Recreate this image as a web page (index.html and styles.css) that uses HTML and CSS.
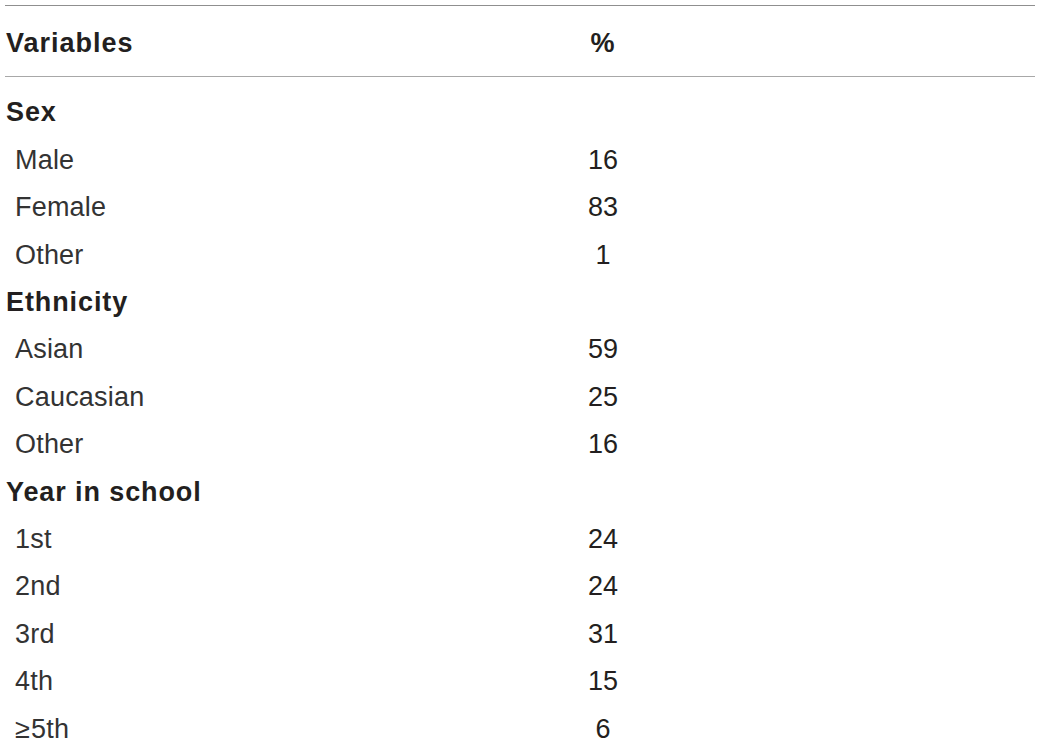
FILE: index.html
```html
<!DOCTYPE html>
<html>
<head>
<meta charset="utf-8">
<link rel="stylesheet" href="styles.css">
</head>
<body>
<table class="tbl">
  <thead>
    <tr><th class="c1">Variables</th><th class="c2">%</th><th class="c3"></th></tr>
  </thead>
  <tbody>
    <tr class="grp first"><td class="c1">Sex</td><td class="c2"></td><td></td></tr>
    <tr><td class="c1 sub">Male</td><td class="c2">16</td><td></td></tr>
    <tr><td class="c1 sub">Female</td><td class="c2">83</td><td></td></tr>
    <tr><td class="c1 sub">Other</td><td class="c2">1</td><td></td></tr>
    <tr class="grp"><td class="c1">Ethnicity</td><td class="c2"></td><td></td></tr>
    <tr><td class="c1 sub">Asian</td><td class="c2">59</td><td></td></tr>
    <tr><td class="c1 sub">Caucasian</td><td class="c2">25</td><td></td></tr>
    <tr><td class="c1 sub">Other</td><td class="c2">16</td><td></td></tr>
    <tr class="grp"><td class="c1">Year in school</td><td class="c2"></td><td></td></tr>
    <tr><td class="c1 sub">1st</td><td class="c2">24</td><td></td></tr>
    <tr><td class="c1 sub">2nd</td><td class="c2">24</td><td></td></tr>
    <tr><td class="c1 sub">3rd</td><td class="c2">31</td><td></td></tr>
    <tr><td class="c1 sub">4th</td><td class="c2">15</td><td></td></tr>
    <tr><td class="c1 sub"><span class="ge">&ge;</span>5th</td><td class="c2">6</td><td></td></tr>
  </tbody>
</table>
</body>
</html>
```
FILE: styles.css
```css
html, body {
  margin: 0;
  padding: 0;
  background: #ffffff;
}
body {
  font-family: "Liberation Sans", Arial, sans-serif;
  color: #231f20;
}
.tbl {
  margin: 5px 0 0 5px;
  width: 1030px;
  border-collapse: collapse;
  table-layout: fixed;
  font-size: 27px;
}
.tbl th, .tbl td {
  padding: 0;
  line-height: 47.4px;
  white-space: nowrap;
}
.tbl thead tr {
  border-top: 1.5px solid #8f8f8f;
  border-bottom: 1.5px solid #a8a8a8;
}
.tbl th {
  font-weight: bold;
  padding-top: 14px;
  padding-bottom: 9px;
  letter-spacing: 1px;
}
.tbl th.c1 {
  padding-left: 1px;
}
.tbl .c1 {
  width: 518px;
  text-align: left;
  padding-left: 1px;
}
.tbl .c2 {
  width: 158px;
  text-align: center;
}
.tbl .grp td {
  font-weight: bold;
  letter-spacing: 0.9px;
}
.tbl .grp.first td {
  padding-top: 12px;
}
.tbl .grp td.c1 {
  padding-left: 1px;
}
.tbl td.sub {
  padding-left: 10px;
  width: 509px;
  color: #333333;
  letter-spacing: 0.2px;
}
.ge {
  display: inline-block;
  margin-right: 1px;
}
```
